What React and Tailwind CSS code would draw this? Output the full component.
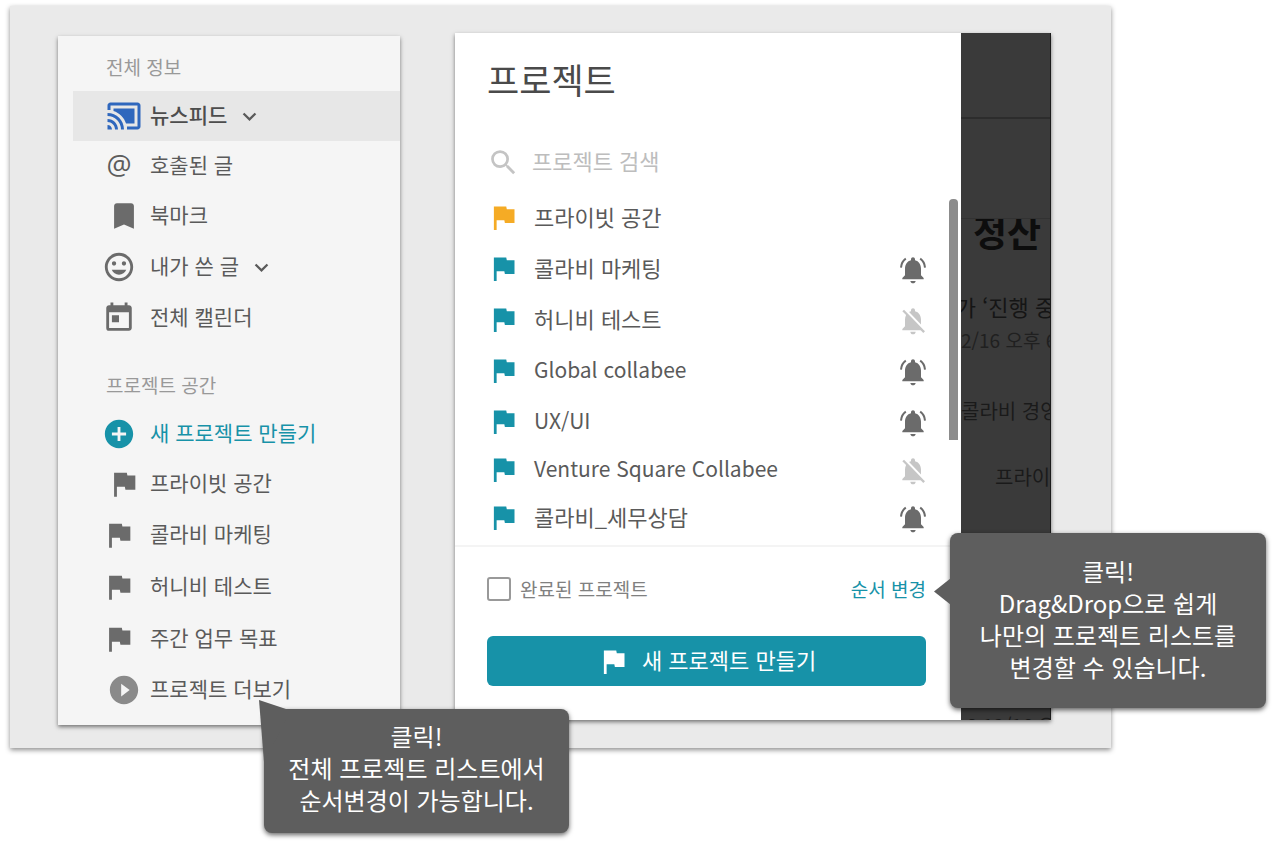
import {
  MdAddCircle,
  MdBookmark,
  MdCastConnected,
  MdExpandMore,
  MdFlag,
  MdInsertEmoticon,
  MdNotificationsOff,
  MdPlayCircleFilled,
  MdSearch,
  MdToday,
} from "react-icons/md";

const infoItems = [
  { label: "뉴스피드", icon: "cast", active: true, expandable: true },
  { label: "호출된 글", icon: "at" },
  { label: "북마크", icon: "bookmark", inset: true },
  { label: "내가 쓴 글", icon: "smile", expandable: true, tall: true },
  { label: "전체 캘린더", icon: "today" },
];

const spaceItems = [
  { label: "새 프로젝트 만들기", icon: "add", accent: true },
  { label: "프라이빗 공간", icon: "flag", inset: true },
  { label: "콜라비 마케팅", icon: "flag", tall: true },
  { label: "허니비 테스트", icon: "flag", tall: true },
  { label: "주간 업무 목표", icon: "flag", tall: true },
  { label: "프로젝트 더보기", icon: "play", inset: true },
];

const projects = [
  { name: "프라이빗 공간", personal: true },
  { name: "콜라비 마케팅", alert: "on" },
  { name: "허니비 테스트", alert: "off" },
  { name: "Global collabee", alert: "on", latin: true },
  { name: "UX/UI", alert: "on", latin: true },
  { name: "Venture Square Collabee", alert: "off", latin: true, compact: true },
  { name: "콜라비_세무상담", alert: "on" },
];

function MenuIcon({ name }) {
  switch (name) {
    case "cast":
      return <MdCastConnected size={36} className="text-[#2f67bd]" />;
    case "at":
      return (
        <span className="w-[34px] pb-1 text-center font-['Open_Sans',sans-serif] text-[28px] leading-8 text-[#5c5c5c]">
          @
        </span>
      );
    case "bookmark":
      return <MdBookmark size={34} className="text-[#6b6b6b]" />;
    case "smile":
      return <MdInsertEmoticon size={34} className="text-[#6b6b6b]" />;
    case "today":
      return <MdToday size={34} className="text-[#6b6b6b]" />;
    case "add":
      return <MdAddCircle size={34} className="text-[#1792a8]" />;
    case "play":
      return <MdPlayCircleFilled size={34} className="text-[#8a8a8a]" />;
    default:
      return <MdFlag size={34} className="text-[#6b6b6b]" />;
  }
}

function RingingBell() {
  return (
    <svg width="32" height="32" viewBox="0 0 24 24" className="text-[#6b6b6b]" aria-hidden="true">
      <path
        fill="currentColor"
        d="M18 11c0-3.07-1.64-5.64-4.5-6.32V4c0-.83-.67-1.5-1.5-1.5s-1.5.67-1.5 1.5v.68C7.63 5.36 6 7.92 6 11v5l-2 2v1h16v-1l-2-2v-5z"
      />
      <path fill="currentColor" d="M10 20.2h4c-.2 1.1-1 1.8-2 1.8s-1.8-.7-2-1.8z" />
      <path
        fill="none"
        stroke="currentColor"
        strokeWidth="1.5"
        d="M3 10.2C3.2 7.4 4.500 5 6.600 3.500M21 10.200C20.800 7.400 19.500 5 17.400 3.500"
      />
    </svg>
  );
}

function MenuItem({ item }) {
  const centered = item.inset || item.active;
  return (
    <li>
      <a
        href="#"
        className={`flex items-center gap-[5px] pl-[29px] text-[21px] leading-8 ${item.tall ? "h-[52px]" : "h-[50px]"} ${
          item.active ? "bg-[#e7e7e7]" : ""
        } ${item.accent ? "text-[#1792a8]" : item.active ? "font-medium text-[#4d4d4d]" : "text-[#5a5a5a]"}`}
      >
        <span className={`flex w-[43px] shrink-0 ${centered ? "justify-center" : "justify-start"}`}>
          <MenuIcon name={item.icon} />
        </span>
        <span className="flex items-center gap-[9px]">
          <span className="pb-1">{item.label}</span>
          {item.expandable && <MdExpandMore size={27} className="text-[#5a5a5a]" />}
        </span>
      </a>
    </li>
  );
}

function Sidebar() {
  return (
    <nav className="mt-[3px] w-[342px] shrink-0 bg-[#f5f5f5] pt-[19px] pb-[10px] pl-[15px] shadow-[0_2px_4px_rgba(0,0,0,0.5)]">
      <h2 className="mb-3 pl-[33px] text-[19px] leading-6 text-[#999999]">전체 정보</h2>
      <ul>
        {infoItems.map((item) => (
          <MenuItem key={item.label} item={item} />
        ))}
      </ul>
      <h2 className="mt-[30px] mb-3 pl-[33px] text-[19px] leading-6 text-[#999999]">프로젝트 공간</h2>
      <ul>
        {spaceItems.map((item) => (
          <MenuItem key={item.label} item={item} />
        ))}
      </ul>
    </nav>
  );
}

function ProjectPanel() {
  return (
    <section className="flex min-w-0 flex-1 flex-col bg-white">
      <h1 className="px-8 pt-[22px] text-[35px] leading-[48px] text-[#4a4a4a]">프로젝트</h1>
      <label className="mt-[43px] flex h-8 items-center gap-3 px-8">
        <MdSearch size={33} className="shrink-0 text-[#c4c4c4]" />
        <input
          type="text"
          aria-label="프로젝트 검색"
          placeholder="프로젝트 검색"
          className="min-w-0 flex-1 bg-transparent pb-1 text-[22px] leading-8 outline-none placeholder:text-[#bdbdbd]"
        />
      </label>
      <div className="mt-[14px] flex items-start border-b-2 border-[#f4f4f4] pr-[3px] pb-[2px]">
        <ul className="min-w-0 flex-1 pr-5 pl-8">
          {projects.map((p) => (
            <li key={p.name} className={`flex items-center gap-[14px] ${p.compact ? "h-[45px]" : "h-[51px]"}`}>
              <MdFlag size={33} className={`shrink-0 ${p.personal ? "text-[#f5ab25]" : "text-[#1792a8]"}`} />
              <a
                href="#"
                className={`flex-1 pb-1 leading-8 text-[#5a5a5a] ${p.latin ? "text-[21px]" : "text-[22px]"}`}
              >
                {p.name}
              </a>
              {p.alert && (
                <button type="button" aria-label={`${p.name} 알림`} className="mt-[2px]">
                  {p.alert === "on" ? <RingingBell /> : <MdNotificationsOff size={32} className="text-[#c6c6c6]" />}
                </button>
              )}
            </li>
          ))}
        </ul>
        <div className="mt-[7px] h-[241px] w-[9px] shrink-0 rounded-t bg-[#8c8c8c]" />
      </div>
      <div className="flex items-center justify-between pt-[26px] pr-[35px] pl-8 text-[19px] leading-8">
        <label className="flex items-center gap-[9px] text-[#808080]">
          <input
            type="checkbox"
            className="size-6 appearance-none rounded-[3px] border-2 border-[#999999] bg-white checked:bg-[#1792a8]"
          />
          완료된 프로젝트
        </label>
        <button type="button" className="text-[#1792a8]">
          순서 변경
        </button>
      </div>
      <div className="pt-[31px] pr-[35px] pb-[33px] pl-8">
        <button
          type="button"
          className="flex h-[50px] w-full items-center justify-center gap-3 rounded-md bg-[#1792a8] text-[22px] leading-8 text-white"
        >
          <MdFlag size={33} />
          <span className="pb-1">새 프로젝트 만들기</span>
        </button>
      </div>
    </section>
  );
}

function DimmedPage() {
  return (
    <aside className="flex h-[687px] w-[90px] shrink-0 flex-col overflow-hidden border-r border-[#1c1c1c] bg-[#3a3a3a] whitespace-nowrap">
      <div className="h-[86px] shrink-0 border-b-2 border-[#2c2c2c]" />
      <div className="h-[100px] shrink-0 border-b border-[#323232]" />
      <div className="flex h-[38px] shrink-0 items-end overflow-hidden pl-3 text-[37px] leading-[52px] font-bold text-[#0d0d0d]">
        정산
      </div>
      <div className="mt-[33px] flex justify-center text-[22px] leading-8 text-[#151515]">가 ‘진행 중</div>
      <div className="mt-[2px] text-[19px] leading-8 text-[#202020]">2/16 오후 6</div>
      <div className="mt-[39px] text-[20px] leading-8 text-[#1a1a1a]">콜라비 경영</div>
      <div className="mt-[34px] pl-[34px] text-[20px] leading-8 text-[#1a1a1a]">프라이빗</div>
      <div className="mt-[216px] pl-[6px] text-[19px] leading-8 text-[#1a1a1a]">3 12/16 오후</div>
    </aside>
  );
}

export default function App() {
  return (
    <main
      className="relative min-h-screen bg-white pt-[6px] pr-[169px] pl-[10px] font-['Noto_Sans_CJK_KR','Noto_Sans',sans-serif]"
      lang="ko"
    >
      <div className="flex items-start gap-[55px] bg-[#eaeaea] pt-[27px] pr-[60px] pb-[23px] pl-12 shadow-[0_2px_5px_rgba(0,0,0,0.45)]">
        <Sidebar />
        <div className="flex min-w-0 flex-1 shadow-[0_2px_4px_rgba(0,0,0,0.5)]">
          <ProjectPanel />
          <DimmedPage />
        </div>
      </div>

      <div
        role="tooltip"
        className="absolute top-[709px] left-[264px] w-[305px] rounded-lg bg-[#5e5e5e] pt-[11px] pb-[17px] text-center text-2xl leading-8 text-white shadow-[0_2px_5px_rgba(0,0,0,0.6)]"
      >
        <svg className="absolute -top-[9px] -left-[5px]" width="30" height="62" viewBox="0 0 30 62" aria-hidden="true">
          <path d="M0 0L27 9L27 20L5 62Z" fill="#5e5e5e" />
        </svg>
        <p className="relative">
          클릭!
          <br />
          전체 프로젝트 리스트에서
          <br />
          순서변경이 가능합니다.
        </p>
      </div>

      <div
        role="tooltip"
        className="absolute top-[533px] right-[14px] w-[316px] rounded-lg bg-[#5e5e5e] pt-[22px] pb-[25px] text-center text-2xl leading-8 text-white shadow-[0_2px_5px_rgba(0,0,0,0.6)]"
      >
        <svg className="absolute top-[45px] -left-4" width="17" height="27" viewBox="0 0 17 27" aria-hidden="true">
          <path d="M17 0L0 13.5L17 27Z" fill="#5e5e5e" />
        </svg>
        <p>
          클릭!
          <br />
          Drag&amp;Drop으로 쉽게
          <br />
          나만의 프로젝트 리스트를
          <br />
          변경할 수 있습니다.
        </p>
      </div>
    </main>
  );
}
